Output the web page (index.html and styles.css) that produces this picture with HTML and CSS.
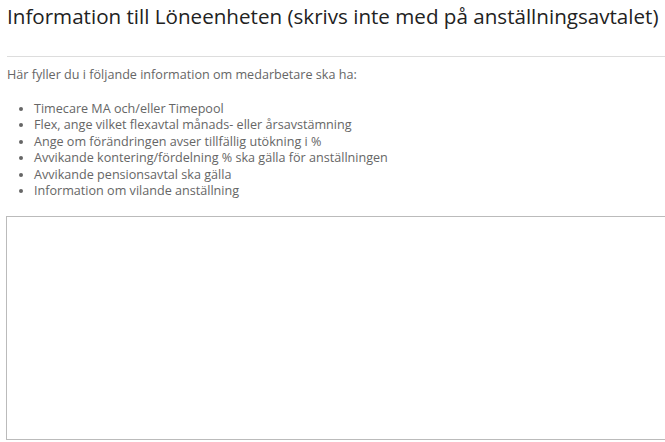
FILE: index.html
```html
<!DOCTYPE html>
<html lang="sv">
<head>
<meta charset="utf-8">
<title>Information till Löneenheten</title>
<link rel="stylesheet" href="styles.css">
</head>
<body>
<div class="page">
  <h1 class="title">Information till Löneenheten (skrivs inte med på anställningsavtalet)</h1>
  <hr class="divider">
  <div class="info">
    <p class="intro">Här fyller du i följande information om medarbetare ska ha:</p>
    <ul class="list">
      <li>Timecare MA och/eller Timepool</li>
      <li>Flex, ange vilket flexavtal månads- eller årsavstämning</li>
      <li>Ange om förändringen avser tillfällig utökning i %</li>
      <li>Avvikande kontering/fördelning % ska gälla för anställningen</li>
      <li>Avvikande pensionsavtal ska gälla</li>
      <li>Information om vilande anställning</li>
    </ul>
  </div>
  <textarea class="field"></textarea>
</div>
</body>
</html>
```

FILE: styles.css
```css
html, body {
  margin: 0;
  padding: 0;
  background: #fff;
  overflow: hidden;
}
body {
  font-family: "Open Sans", "Liberation Sans", sans-serif;
  color: #333;
}
.page {
  width: 700px;
  padding: 0 0 0 6px;
}
.title {
  margin: 0;
  padding: 1px 0 0 1px;
  font-size: 20.6px;
  font-weight: 400;
  line-height: 30px;
  color: #222;
  white-space: nowrap;
}
.divider {
  border: 0;
  border-top: 1px solid #ddd;
  margin: 25px 0 0 1px;
  height: 0;
}
.info {
  font-size: 12.6px;
  color: #666;
  padding-left: 1px;
}
.intro {
  margin: 9px 0 0 0;
  line-height: 17px;
}
.list {
  margin: 18px 0 0 0;
  padding-left: 27px;
  line-height: 16.4px;
}
.field {
  display: block;
  margin-top: 17px;
  width: 700px;
  height: 224px;
  border: 1px solid #bbb;
  box-sizing: border-box;
  padding: 0;
  resize: none;
  background: #fff;
}
```
